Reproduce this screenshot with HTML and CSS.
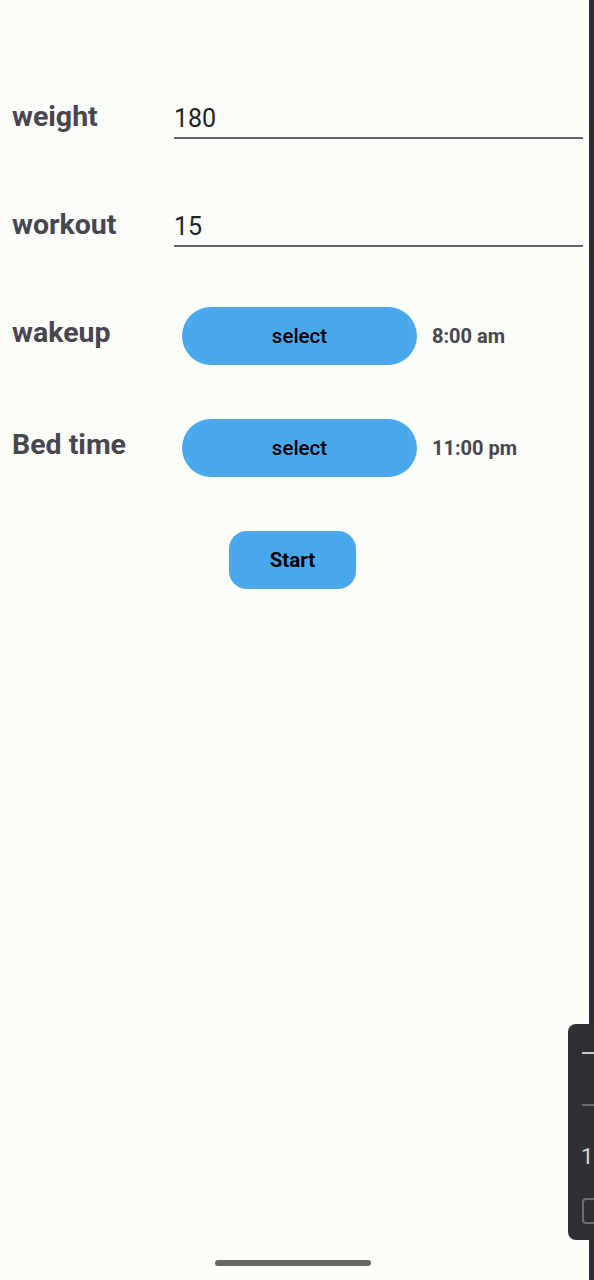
FILE: index.html
```html
<!DOCTYPE html>
<html>
<head>
<meta charset="utf-8">
<link rel="stylesheet" href="styles.css">
</head>
<body>
<div class="screen">
  <div class="form">
    <div class="row field-row">
      <div class="label">weight</div>
      <div class="input">180</div>
    </div>
    <div class="row field-row">
      <div class="label">workout</div>
      <div class="input">15</div>
    </div>
    <div class="row time-row">
      <div class="label">wakeup</div>
      <div class="pill">select</div>
      <div class="time">8:00 am</div>
    </div>
    <div class="row time-row">
      <div class="label">Bed time</div>
      <div class="pill">select</div>
      <div class="time">11:00 pm</div>
    </div>
    <div class="start-wrap">
      <div class="start">Start</div>
    </div>
  </div>
  <div class="home-bar"></div>
  <div class="edge"></div>
  <div class="side-panel">
    <div class="sp-line sp-line1"></div>
    <div class="sp-line sp-line2"></div>
    <div class="sp-num">1</div>
    <div class="sp-box"></div>
  </div>
</div>
</body>
</html>
```

FILE: styles.css
```css
html, body {
  margin: 0;
  padding: 0;
  background: #fafdf8;
}
body {
  font-family: Roboto, "Noto Sans", sans-serif;
}
.screen {
  position: relative;
  width: 594px;
  height: 1280px;
  overflow: hidden;
  background: #fafdf8;
}
.form {
  display: flex;
  flex-direction: column;
  padding: 102px 11px 0 12px;
}
.row {
  display: flex;
}
.label {
  width: 162px;
  flex: none;
  font-size: 28.5px;
  font-weight: 700;
  color: #47454f;
  line-height: 30px;
}
.field-row {
  align-items: flex-start;
  height: 108px;
}
.input {
  flex: 1;
  font-size: 25px;
  color: #222222;
  line-height: 34px;
  height: 35px;
  border-bottom: 2px solid #66656b;
}
.time-row {
  height: 112px;
  align-items: flex-start;
}
.pill {
  margin-left: 8px;
  margin-top: -11px;
  width: 235px;
  height: 58px;
  border-radius: 29px;
  background: #4aa8ee;
  color: #000;
  font-size: 20.5px;
  font-weight: 500;
  display: flex;
  align-items: center;
  justify-content: center;
}
.time {
  margin-left: 15px;
  margin-top: -11px;
  height: 58px;
  display: flex;
  align-items: center;
  font-size: 20px;
  font-weight: 700;
  color: #47454f;
}
.start-wrap {
  display: flex;
  padding-left: 217px;
  margin-top: -11px;
}
.start {
  width: 127px;
  height: 58px;
  border-radius: 18px;
  background: #4aa8ee;
  color: #000;
  font-size: 20.5px;
  font-weight: 700;
  display: flex;
  align-items: center;
  justify-content: center;
}
.home-bar {
  position: absolute;
  left: 215px;
  top: 1260px;
  width: 156px;
  height: 6px;
  border-radius: 3px;
  background: #666863;
}
.edge {
  position: absolute;
  top: 0;
  right: 0;
  width: 5px;
  height: 1280px;
  background: #2b2d30;
}
.side-panel {
  position: absolute;
  left: 568px;
  top: 1024px;
  width: 40px;
  height: 216px;
  border-radius: 8px;
  background: #2e3033;
}
.sp-line {
  position: absolute;
  left: 14px;
  width: 30px;
  height: 2px;
}
.sp-line1 {
  top: 28px;
  background: #c9cacc;
}
.sp-line2 {
  top: 80px;
  background: #6c6e72;
}
.sp-num {
  position: absolute;
  left: 13px;
  top: 120px;
  font-size: 22px;
  color: #d8d9db;
  font-family: Roboto, sans-serif;
}
.sp-box {
  position: absolute;
  left: 14px;
  top: 174px;
  width: 22px;
  height: 22px;
  border: 2px solid #6c6e72;
  border-radius: 4px;
}
```
